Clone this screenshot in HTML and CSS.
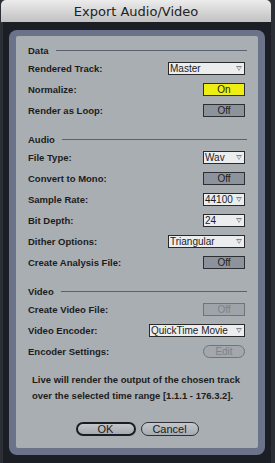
FILE: index.html
```html
<!DOCTYPE html>
<html lang="en">
<head>
    <meta charset="UTF-8">
    <title>Export Audio/Video</title>
    <link rel="stylesheet" href="styles.css">
</head>
<body>
    <div class="window">
        <div class="titlebar">Export Audio/Video</div>

        <div class="frame">
            <div class="panel">
                <div class="content">

                    <div class="section-head">Data</div>
                    <div class="row">
                        <span class="label">Rendered Track:</span>
                        <div class="dropdown wide">Master<span class="arrow"></span></div>
                    </div>
                    <div class="row">
                        <span class="label">Normalize:</span>
                        <div class="toggle on">On</div>
                    </div>
                    <div class="row">
                        <span class="label">Render as Loop:</span>
                        <div class="toggle">Off</div>
                    </div>

                    <div class="section-head spaced">Audio</div>
                    <div class="row">
                        <span class="label">File Type:</span>
                        <div class="dropdown">Wav<span class="arrow"></span></div>
                    </div>
                    <div class="row">
                        <span class="label">Convert to Mono:</span>
                        <div class="toggle">Off</div>
                    </div>
                    <div class="row">
                        <span class="label">Sample Rate:</span>
                        <div class="dropdown">44100<span class="arrow"></span></div>
                    </div>
                    <div class="row">
                        <span class="label">Bit Depth:</span>
                        <div class="dropdown">24<span class="arrow"></span></div>
                    </div>
                    <div class="row">
                        <span class="label">Dither Options:</span>
                        <div class="dropdown wide">Triangular<span class="arrow"></span></div>
                    </div>
                    <div class="row">
                        <span class="label">Create Analysis File:</span>
                        <div class="toggle">Off</div>
                    </div>

                    <div class="section-head spaced">Video</div>
                    <div class="row">
                        <span class="label">Create Video File:</span>
                        <div class="toggle disabled">Off</div>
                    </div>
                    <div class="row">
                        <span class="label">Video Encoder:</span>
                        <div class="dropdown wider">QuickTime Movie<span class="arrow"></span></div>
                    </div>
                    <div class="row">
                        <span class="label">Encoder Settings:</span>
                        <div class="pill-small">Edit</div>
                    </div>

                    <p class="note">Live will render the output of the chosen track<br>over the selected time range [1.1.1 - 176.3.2].</p>

                    <div class="buttons">
                        <button class="btn default">OK</button>
                        <button class="btn">Cancel</button>
                    </div>

                </div>
            </div>
        </div>
    </div>
</body>
</html>
```

FILE: styles.css
```css
body {
    margin: 0;
    width: 275px;
    height: 463px;
    overflow: hidden;
    background: #2c2f36;
    font-family: 'Liberation Sans', Arial, sans-serif;
    color: #1c1c1c;
}

.window {
    margin-left: 1px;
    width: 270px;
}

.titlebar {
    height: 22px;
    line-height: 23px;
    border-radius: 5px 5px 0 0;
    background: linear-gradient(#ececec, #d2d2d2 60%, #c2c2c2);
    text-align: center;
    font-family: 'DejaVu Sans', sans-serif;
    font-size: 13px;
    color: #222;
}

.frame {
    margin-left: 2px;
    width: 256px;
    padding: 8px 6px;
    background: #1b1e25;
}

.panel {
    background: #6a7389;
    border-radius: 8px;
    padding: 6px 7px 7px;
}

.content {
    background: #a9aeb3;
    border-radius: 2px;
    height: 406px;
    padding: 6px 0 0 12px;
}

.section-head {
    display: flex;
    align-items: center;
    height: 16px;
    padding-right: 11px;
    font-size: 9.5px;
    font-weight: bold;
}

.section-head::after {
    content: "";
    flex: 1;
    height: 1px;
    margin-left: 7px;
    background: #5a6070;
}

.section-head.spaced {
    margin-top: 10px;
}

.row {
    display: flex;
    align-items: center;
    justify-content: space-between;
    height: 21px;
    padding-right: 13px;
}

.label {
    font-size: 9.5px;
    font-weight: bold;
}

.dropdown {
    position: relative;
    box-sizing: border-box;
    width: 42px;
    height: 13px;
    padding-left: 1px;
    border: 1px solid #2a2a2a;
    background: #ecedef;
    font-size: 10px;
    line-height: 11px;
}

.dropdown.wide {
    width: 77px;
}

.dropdown.wider {
    width: 96px;
}

/* small hollow down-triangle */
.arrow {
    position: absolute;
    right: 2px;
    top: 3px;
    width: 0;
    height: 0;
    border-left: 3.5px solid transparent;
    border-right: 3.5px solid transparent;
    border-top: 5px solid #80858d;
}

.arrow::after {
    content: "";
    position: absolute;
    left: -2px;
    top: -4px;
    border-left: 2px solid transparent;
    border-right: 2px solid transparent;
    border-top: 3px solid #d8dadd;
}

.toggle {
    box-sizing: border-box;
    width: 42px;
    height: 13px;
    border: 1px solid #2e2f33;
    background: #8d939c;
    text-align: center;
    font-size: 10px;
    line-height: 11px;
}

.toggle.on {
    background: #eeee12;
}

.toggle.disabled {
    border-color: #6f747b;
    background: #9fa4aa;
    color: #7c8187;
}

.pill-small {
    box-sizing: border-box;
    width: 42px;
    height: 13px;
    border: 1px solid #6f747b;
    border-radius: 7px;
    background: #a3a8ae;
    color: #7c8187;
    text-align: center;
    font-size: 10px;
    line-height: 11px;
}

.note {
    margin: 10px 0 0 4px;
    font-size: 9.5px;
    font-weight: bold;
    line-height: 16px;
}

.buttons {
    display: flex;
    justify-content: center;
    gap: 5px;
    margin: 18px 0 0 -12px;
}

.btn {
    box-sizing: border-box;
    width: 58px;
    height: 14px;
    padding: 0;
    border: 1px solid #2f3035;
    border-radius: 7px;
    background: linear-gradient(#c3c7cc, #a6abb1);
    font-family: 'Liberation Sans', Arial, sans-serif;
    font-size: 11px;
    line-height: 12px;
    color: #1c1c1c;
}

.btn.default {
    width: 60px;
    border: 2px solid #1c1d22;
    line-height: 10px;
}
```
